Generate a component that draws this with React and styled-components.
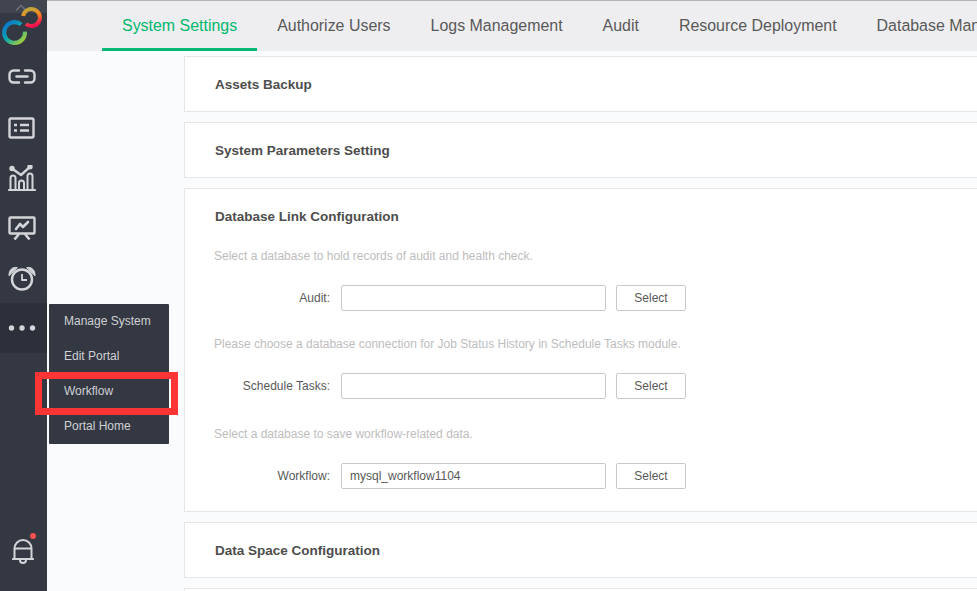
import React from 'react';
import styled, { createGlobalStyle } from 'styled-components';

const GlobalStyle = createGlobalStyle`
  html, body {
    margin: 0;
    padding: 0;
    background: #fafbfd;
  }
  * {
    box-sizing: border-box;
  }
`;

const Page = styled.div`
  position: relative;
  display: flex;
  width: 977px;
  height: 591px;
  overflow: hidden;
  font-family: 'Liberation Sans', Arial, sans-serif;
  background: #fafbfd;
`;

const Sidebar = styled.aside`
  display: flex;
  flex-direction: column;
  flex: 0 0 47px;
  background: #343843;
`;

const Collapse = styled.div`
  height: 13px;
  background: #41454f;
  display: flex;
  justify-content: center;
  padding: 4px 5px 0 0;
`;

const LogoWrap = styled.div`
  height: 40px;

  svg {
    display: block;
    margin-top: -8px;
  }
`;

const NavItem = styled.div`
  height: 50px;
  padding-right: 3px;
  display: flex;
  align-items: center;
  justify-content: center;
  background: ${({ $active }) => ($active ? '#2c303a' : 'transparent')};
`;

const Spacer = styled.div`
  flex: 1;
`;

const BellWrap = styled.div`
  position: relative;
  height: 70px;
  padding: 18px 2px 0 0;
  display: flex;
  justify-content: center;
`;

const Dot = styled.span`
  position: absolute;
  top: 12px;
  left: 30px;
  width: 6px;
  height: 6px;
  border-radius: 50%;
  background: #f9524c;
`;

const Main = styled.main`
  flex: 1;
  min-width: 0;
  display: flex;
  flex-direction: column;
`;

const Tabs = styled.nav`
  display: flex;
  flex: 0 0 51px;
  padding-left: 55px;
  background: #eeeef0;
  border-top: 1px solid #b4b4b4;
  white-space: nowrap;
`;

const Tab = styled.div`
  padding: 0 20px;
  line-height: 49px;
  height: 50px;
  font-size: 15.95px;
  color: ${({ $active }) => ($active ? '#00b86e' : '#595959')};
  border-bottom: 3px solid ${({ $active }) => ($active ? '#00b974' : 'transparent')};
`;

const Content = styled.div`
  display: flex;
  flex-direction: column;
  gap: 10px;
  width: 840px;
  margin-left: 137px;
  padding-top: 5px;
`;

const Card = styled.section`
  flex: none;
  min-height: 56px;
  padding: 0 30px;
  background: #fff;
  border: 1px solid #e6e6e6;
`;

const CardTitle = styled.h3`
  margin: 0;
  height: 54px;
  line-height: 55px;
  font-size: 13.5px;
  font-weight: bold;
  color: #4d4d4d;
`;

const Hint = styled.p`
  margin: ${({ $top }) => $top || 0}px 0 0 -1px;
  height: 20px;
  line-height: 20px;
  font-size: 12px;
  color: #bdbdbd;
`;

const FormRow = styled.div`
  display: flex;
  align-items: center;
  height: 26px;
  margin: ${({ $top }) => $top}px 0 ${({ $bottom }) => $bottom}px;
`;

const Label = styled.label`
  width: 126px;
  padding-right: 11px;
  text-align: right;
  font-size: 12px;
  color: #595959;
`;

const Field = styled.div`
  width: 265px;
  height: 26px;
  padding: 0 8px;
  line-height: 25px;
  font-size: 12px;
  color: #595959;
  background: #fff;
  border: 1px solid #c9c9c9;
  border-radius: 2px;
`;

const SelectButton = styled.button`
  width: 70px;
  height: 26px;
  margin-left: 10px;
  padding: 0;
  font-family: inherit;
  font-size: 12px;
  color: #595959;
  background: #fff;
  border: 1px solid #c9c9c9;
  border-radius: 2px;
`;

const Menu = styled.ul`
  position: absolute;
  left: 49px;
  top: 304px;
  width: 120px;
  height: 140px;
  margin: 0;
  padding: 0;
  list-style: none;
  background: #343843;
  border-radius: 1px;
`;

const MenuItem = styled.li`
  height: 35px;
  padding-left: 15px;
  line-height: 35px;
  font-size: 12px;
  color: #cfd0d3;
`;

const Highlight = styled.div`
  position: absolute;
  left: 35px;
  top: 372px;
  width: 143px;
  height: 43px;
  border: 7px solid #fe3535;
`;

const iconProps = {
  fill: 'none',
  stroke: '#d4d5d8',
  strokeWidth: 2.2,
  strokeLinecap: 'round',
  strokeLinejoin: 'round',
};

const Logo = () => (
  <svg width="47" height="45" viewBox="0 0 47 45" fill="none">
    <defs>
      <linearGradient id="big" x1="0.1" y1="0.1" x2="0.9" y2="0.95">
        <stop offset="0" stopColor="#0c78c8" />
        <stop offset="0.45" stopColor="#0ca8ae" />
        <stop offset="1" stopColor="#a8cf38" />
      </linearGradient>
      <linearGradient id="small" x1="0.2" y1="0" x2="0.5" y2="1">
        <stop offset="0" stopColor="#b9a83c" />
        <stop offset="0.45" stopColor="#f58a1f" />
        <stop offset="1" stopColor="#f5104f" />
      </linearGradient>
    </defs>
    <path d="M21.2 19.5A10.4 10.4 0 1 0 24.9 26.6" stroke="url(#big)" strokeWidth="4.2" />
    <path d="M23.1 11A8.5 8.5 0 1 1 26 19" stroke="url(#small)" strokeWidth="4" />
  </svg>
);

// drawn high in a taller box, this icon sits 2px above the row's centre
const LinkIcon = () => (
  <svg width="28" height="19" viewBox="0 0 28 19" {...iconProps} strokeWidth="2.4">
    <path d="M11 1.5H5.5a4 4 0 0 0-4 4v4a4 4 0 0 0 4 4H11" />
    <path d="M17 1.5h5.5a4 4 0 0 1 4 4v4a4 4 0 0 1-4 4H17" />
    <path d="M8.5 7.5h11" />
  </svg>
);

const ListIcon = () => (
  <svg width="28" height="22" viewBox="0 0 28 22" {...iconProps} strokeLinecap="butt" strokeLinejoin="miter" strokeWidth="2.4">
    <rect x="1.5" y="1.5" width="24" height="19" rx="1.5" />
    <path d="M6 8h3M6 13.5h3M12 8h9M12 13.5h9" />
  </svg>
);

const ChartIcon = () => (
  <svg width="28" height="26" viewBox="0 0 28 26" {...iconProps} strokeWidth="2">
    <path d="M1 25h26" strokeWidth="2.2" />
    <path d="M2.5 25V13a2.5 2.5 0 0 1 5 0v12M11 25v-7a2.5 2.5 0 0 1 5 0v7M19.5 25V11a2.5 2.5 0 0 1 5 0v14" />
    <circle cx="4" cy="3.5" r="1.7" fill="#d4d5d8" />
    <circle cx="22" cy="1.8" r="1.7" fill="#d4d5d8" />
    <path d="M4 3.5l9 6.5 9-8.2" strokeWidth="2.4" />
  </svg>
);

const BoardIcon = () => (
  <svg width="28" height="25" viewBox="0 0 28 25" {...iconProps} strokeLinecap="butt" strokeWidth="2.4">
    <rect x="1.5" y="1.5" width="25" height="16" rx="1" />
    <path d="M8 13l4-5 3 3 5-5" strokeLinecap="round" strokeWidth="2.6" />
    <path d="M11 18l-4.5 5.5M17 18l4.5 5.5" strokeWidth="2.6" />
  </svg>
);

const ClockIcon = () => (
  <svg width="28" height="25" viewBox="0 0 28 25" {...iconProps}>
    <path d="M1 9.5C.5 4 5 .5 9 1.5z" fill="#d4d5d8" strokeWidth="1" />
    <path d="M27 9.5C27.5 4 23 .5 19 1.5z" fill="#d4d5d8" strokeWidth="1" />
    <circle cx="14" cy="13.5" r="10" strokeWidth="2.4" />
    <path d="M14 8v6h5" strokeWidth="1.8" strokeLinecap="butt" />
  </svg>
);

const DotsIcon = () => (
  <svg width="28" height="6" viewBox="0 0 28 6">
    <circle cx="3.5" cy="3" r="2.7" fill="#d4d5d8" />
    <circle cx="14" cy="3" r="2.7" fill="#d4d5d8" />
    <circle cx="24.5" cy="3" r="2.7" fill="#d4d5d8" />
  </svg>
);

const BellIcon = () => (
  <svg width="22" height="25" viewBox="0 0 22 25" {...iconProps} strokeWidth="2">
    <path d="M2.5 19.5V9.5a8.500 8.500 0 0 1 17 0v10" />
    <path d="M3 9.5h16" />
    <path d="M1 20h20" strokeWidth="2.2" />
    <path d="M8 21a3 3 0 0 0 6 0" />
  </svg>
);

const navIcons = [LinkIcon, ListIcon, ChartIcon, BoardIcon, ClockIcon];
const tabs = ['System Settings', 'Authorize Users', 'Logs Management', 'Audit', 'Resource Deployment', 'Database Management'];
const menuItems = ['Manage System', 'Edit Portal', 'Workflow', 'Portal Home'];

export default function App() {
  return (
    <Page>
      <GlobalStyle />
      <Sidebar>
        <Collapse>
          <svg width="12" height="7" viewBox="0 0 12 7" fill="none" stroke="#6e717a" strokeWidth="1.5">
            <path d="M1 6.5l5-5 5 5" />
          </svg>
        </Collapse>
        <LogoWrap>
          <Logo />
        </LogoWrap>
        {navIcons.map((Icon, i) => (
          <NavItem key={i}>
            <Icon />
          </NavItem>
        ))}
        <NavItem $active>
          <DotsIcon />
        </NavItem>
        <Spacer />
        <BellWrap>
          <BellIcon />
          <Dot />
        </BellWrap>
      </Sidebar>
      <Main>
        <Tabs>
          {tabs.map((t, i) => (
            <Tab key={t} $active={i === 0}>
              {t}
            </Tab>
          ))}
        </Tabs>
        <Content>
          <Card>
            <CardTitle>Assets Backup</CardTitle>
          </Card>
          <Card>
            <CardTitle>System Parameters Setting</CardTitle>
          </Card>
          <Card>
            <CardTitle>Database Link Configuration</CardTitle>
            <Hint $top={3}>Select a database to hold records of audit and health check.</Hint>
            <FormRow $top={19} $bottom={23}>
              <Label>Audit:</Label>
              <Field />
              <SelectButton>Select</SelectButton>
            </FormRow>
            <Hint>Please choose a database connection for Job Status History in Schedule Tasks module.</Hint>
            <FormRow $top={19} $bottom={25}>
              <Label>Schedule Tasks:</Label>
              <Field />
              <SelectButton>Select</SelectButton>
            </FormRow>
            <Hint>Select a database to save workflow-related data.</Hint>
            <FormRow $top={19} $bottom={22}>
              <Label>Workflow:</Label>
              <Field>mysql_workflow1104</Field>
              <SelectButton>Select</SelectButton>
            </FormRow>
          </Card>
          <Card>
            <CardTitle>Data Space Configuration</CardTitle>
          </Card>
          <Card />
        </Content>
      </Main>
      <Menu>
        {menuItems.map((m) => (
          <MenuItem key={m}>{m}</MenuItem>
        ))}
      </Menu>
      <Highlight />
    </Page>
  );
}
